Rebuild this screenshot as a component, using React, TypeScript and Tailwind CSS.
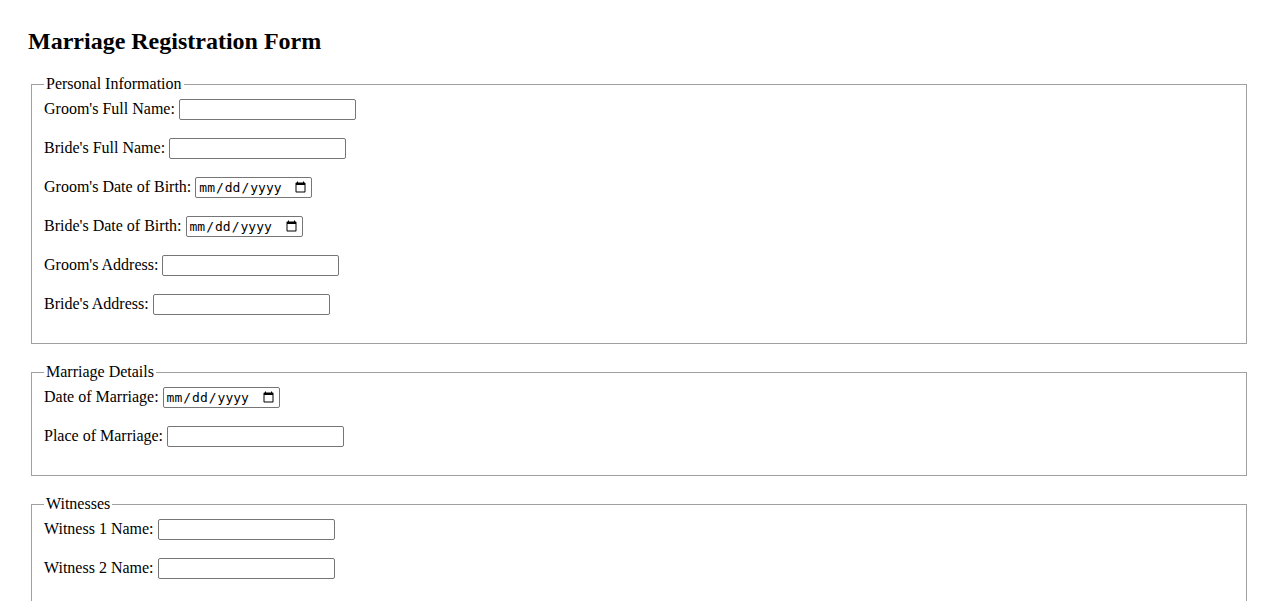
import React from "react";

const serif = { fontFamily: '"Liberation Serif", "Times New Roman", serif' };

function TextRow({ label }: { label: string }) {
  return (
    <div className="flex items-start gap-[4px] h-[21px] mb-[18px]">
      <label className="text-[16px] leading-[18px] text-black mt-[1px]">{label}</label>
      <input
        type="text"
        className="w-[177px] h-[21px] border border-[#767676] rounded-[2px] px-[2px] bg-white text-[13px]"
        style={{ fontFamily: '"Liberation Sans", Arial, sans-serif' }}
      />
    </div>
  );
}

function DateRow({ label }: { label: string }) {
  return (
    <div className="flex items-start gap-[4px] h-[21px] mb-[18px]">
      <label className="text-[16px] leading-[18px] text-black mt-[1px]">{label}</label>
      <input
        type="date"
        className="w-[117px] h-[21px] border border-[#767676] rounded-[2px] pl-[2px] pr-[2px] bg-white text-[13px] leading-[15px]"
        style={{ fontFamily: '"DejaVu Sans Mono", "Liberation Mono", monospace' }}
      />
    </div>
  );
}

function Section({ legend, children }: { legend: string; children: React.ReactNode }) {
  return (
    <fieldset className="mx-[3px] mb-[19px] border border-[#a0a0a0] px-[12px] pt-[6px] pb-[10px]">
      <legend className="px-[2px] text-[16px] leading-[18px] text-black">{legend}</legend>
      {children}
    </fieldset>
  );
}

export default function App() {
  return (
    <div className="bg-white min-h-screen px-[28px] pt-[28px] pb-[28px] text-black" style={serif}>
      <h2 className="text-[24px] leading-[27px] font-bold mb-[20px]">Marriage Registration Form</h2>
      <form>
        <Section legend="Personal Information">
          <TextRow label="Groom's Full Name:" />
          <TextRow label="Bride's Full Name:" />
          <DateRow label="Groom's Date of Birth:" />
          <DateRow label="Bride's Date of Birth:" />
          <TextRow label="Groom's Address:" />
          <TextRow label="Bride's Address:" />
        </Section>
        <Section legend="Marriage Details">
          <DateRow label="Date of Marriage:" />
          <TextRow label="Place of Marriage:" />
        </Section>
        <Section legend="Witnesses">
          <TextRow label="Witness 1 Name:" />
          <TextRow label="Witness 2 Name:" />
        </Section>
        <div className="mx-[3px]">
          <button
            type="submit"
            className="px-[6px] h-[21px] border border-[#767676] rounded-[2px] bg-[#efefef] text-[13px]"
            style={{ fontFamily: '"Liberation Sans", Arial, sans-serif' }}
          >
            Submit
          </button>
        </div>
      </form>
    </div>
  );
}
